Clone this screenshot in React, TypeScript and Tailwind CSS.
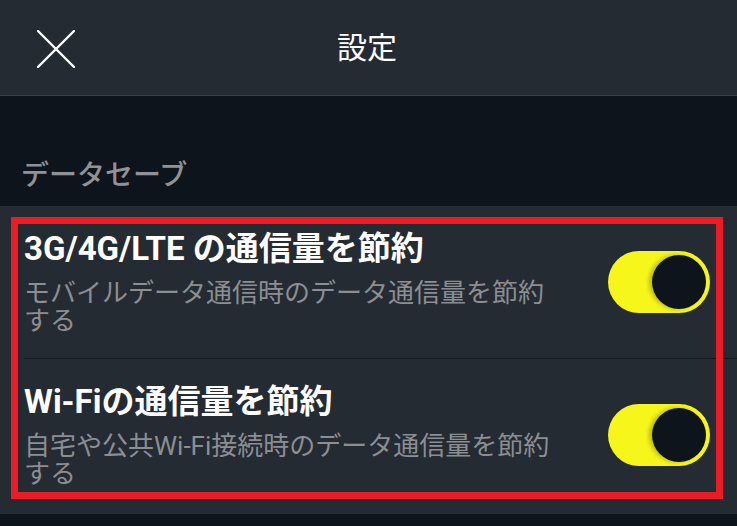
import React, { useState } from 'react'

const font = { fontFamily: 'Roboto, "Noto Sans CJK JP", sans-serif' }

function Toggle({ on, onChange }: { on: boolean; onChange: () => void }) {
  return (
    <button
      onClick={onChange}
      className={`flex items-center w-[102px] h-[62px] rounded-full px-[4px] shrink-0 ${
        on ? 'bg-[#f6f61b] justify-end' : 'bg-[#5a5f66] justify-start'
      }`}
    >
      <span className="block w-[54px] h-[54px] rounded-full bg-[#0e141b] shadow-[-3px_0_4px_rgba(0,0,0,0.25)]" />
    </button>
  )
}

function SettingRow({
  title,
  lines,
  on,
  onChange,
  divider,
}: {
  title: string
  lines: string[]
  on: boolean
  onChange: () => void
  divider?: boolean
}) {
  return (
    <div className="pl-[24px]">
      <div className={`flex items-center pr-[27px] pt-[23px] pb-[23px] ${divider ? 'border-b border-[#14191f]' : ''}`}>
        <div className="flex-1">
          <div className="text-white font-bold text-[33px] leading-[40px]">{title}</div>
          <div className="mt-[10px] text-[#8b8e92] text-[26px] leading-[28px]">
            {lines.map((l, i) => (
              <div key={i}>{l}</div>
            ))}
          </div>
        </div>
        <Toggle on={on} onChange={onChange} />
      </div>
    </div>
  )
}

export default function App() {
  const [mobile, setMobile] = useState(true)
  const [wifi, setWifi] = useState(true)

  return (
    <div className="w-[737px] h-[526px] bg-[#0e141b] overflow-hidden" style={font}>
      {/* Header */}
      <div className="grid grid-cols-[1fr_auto_1fr] items-center h-[96px] bg-[#252b33] border-b border-[#3a4047]">
        <div className="pl-[37px] pt-[2px]">
          <svg width="38" height="38" viewBox="0 0 38 38" fill="none" stroke="white" strokeWidth="2.4" strokeLinecap="round">
            <path d="M1 1 L37 37 M37 1 L1 37" />
          </svg>
        </div>
        <div className="text-white text-[30px] leading-[36px] pr-[3px]">設定</div>
        <div />
      </div>

      {/* Section label */}
      <div className="h-[110px] flex items-end pb-[12px] pl-[21px]">
        <div className="text-[#8f9296] text-[28px] leading-[36px] font-medium">データセーブ</div>
      </div>

      {/* Card */}
      <div className="relative bg-[#252b33] h-[308px]">
        <SettingRow
          title="3G/4G/LTE の通信量を節約"
          lines={['モバイルデータ通信時のデータ通信量を節約', 'する']}
          on={mobile}
          onChange={() => setMobile(!mobile)}
          divider
        />
        <SettingRow
          title="Wi-Fiの通信量を節約"
          lines={['自宅や公共Wi-Fi接続時のデータ通信量を節約', 'する']}
          on={wifi}
          onChange={() => setWifi(!wifi)}
        />
        {/* annotation frame */}
        <div className="absolute left-[11px] top-[11px] w-[712px] h-[282px] border-[7px] border-[#ed1c24] pointer-events-none" />
      </div>
    </div>
  )
}
